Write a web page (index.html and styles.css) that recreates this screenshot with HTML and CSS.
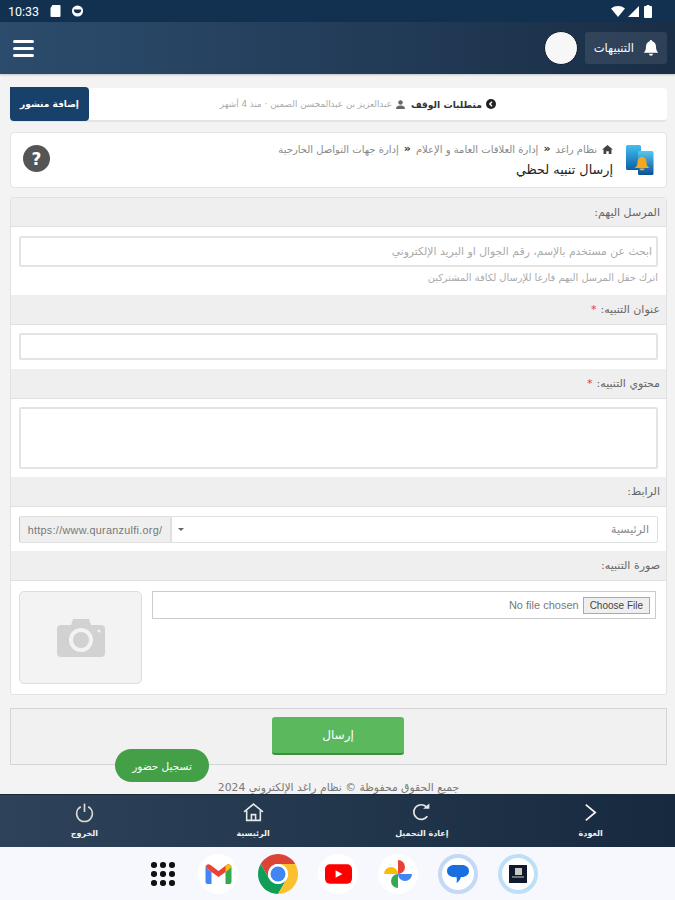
FILE: index.html

```html
<!DOCTYPE html>
<html lang="ar" dir="rtl">
<head>
    <meta charset="UTF-8">
    <meta name="viewport" content="width=device-width, initial-scale=1.0">
    <title>إرسال تنبيه لحظي</title>
    <link rel="stylesheet" href="styles.css">
</head>
<body>
    <!-- Android status bar -->
    <div class="status-bar" dir="ltr">
        <div class="status-side">
            <span class="clock">10:33</span>
            <svg class="status-icon" viewBox="0 0 12 14"><path d="M3 1h7a1 1 0 0 1 1 1v10a1 1 0 0 1-1 1H2a1 1 0 0 1-1-1V4z" fill="#fff"/></svg>
            <svg class="status-icon" viewBox="0 0 14 14"><circle cx="7" cy="7" r="6" fill="#fff"/><path d="M3 5.500h8a4 4 0 0 1-8 0z" fill="#12304f"/></svg>
        </div>
        <div class="status-side">
            <svg class="wifi" viewBox="0 0 14 11"><path d="M0 2.500C4 -.8 10 -.8 14 2.500L7 11z" fill="#fff"/></svg>
            <svg class="signal" viewBox="0 0 11 11"><path d="M11 0v11H0z" fill="#fff"/></svg>
            <svg class="battery" viewBox="0 0 8 13"><path d="M2.500 0h3v1H7a1 1 0 0 1 1 1v10a1 1 0 0 1-1 1H1a1 1 0 0 1-1-1V2a1 1 0 0 1 1-1h1.500z" fill="#fff"/></svg>
        </div>
    </div>

    <header class="top-bar">
        <div class="top-actions">
            <div class="alerts-btn">
                <svg class="bell" viewBox="0 0 16 16"><path d="M8 0a1.200 1.200 0 0 1 1.200 1.300C11.600 1.900 13 4 13 6.500c0 3.500 1 4.800 2.300 6.300H.7C2 11.300 3 10 3 6.500 3 4 4.400 1.900 6.800 1.300A1.200 1.200 0 0 1 8 0zM6 13.800h4a2 2 0 0 1-4 0z" fill="#fff"/></svg>
                <span>التنبيهات</span>
            </div>
            <div class="avatar"></div>
        </div>
        <div class="burger"><span></span><span></span><span></span></div>
    </header>

    <main class="content">
        <div class="card ticker">
            <div class="ticker-text">
                <svg class="dot-icon" viewBox="0 0 10 10"><circle cx="5" cy="5" r="5" fill="#222"/><path d="M6 2.800 3.800 5 6 7.200" fill="none" stroke="#fff" stroke-width="1.400"/></svg>
                <strong>متطلبات الوقف</strong>
                <svg class="user-icon" viewBox="0 0 10 10"><circle cx="5" cy="2.800" r="2.500" fill="#666"/><path d="M0 10c0-3 2-4 5-4s5 1 5 4z" fill="#666"/></svg>
                <span>عبدالعزيز بن عبدالمحسن الصمين · منذ 4 أشهر</span>
            </div>
            <a class="add-post">إضافة منشور</a>
        </div>

        <div class="card page-head">
            <svg class="page-icon" viewBox="0 0 28 30">
                <defs>
                    <linearGradient id="phone-back" x1="0" y1="0" x2="0" y2="1">
                        <stop offset="0" stop-color="#3fc0f0"/>
                        <stop offset="1" stop-color="#0d5fa8"/>
                    </linearGradient>
                    <linearGradient id="phone-front" x1="0" y1="0" x2="0" y2="1">
                        <stop offset="0" stop-color="#58c8f2"/>
                        <stop offset="1" stop-color="#0a4f96"/>
                    </linearGradient>
                </defs>
                <rect x="0" y="0" width="15" height="25" rx="1.500" fill="url(#phone-back)"/>
                <rect x="12" y="6" width="15.500" height="24" rx="1.500" fill="url(#phone-front)"/>
                <path d="M16 12c3 0 4.500 2.500 4.500 5.500 0 3 1 4 3 5.500H8.500c2-1.500 3-2.500 3-5.500 0-3 1.500-5.500 4.500-5.500z" fill="#f7a823"/>
                <path d="M13.500 23.500h5a2.500 2 0 0 1-5 0z" fill="#f7a823"/>
            </svg>
            <div class="page-titles">
                <div class="crumbs">
                    <svg class="home-icon" viewBox="0 0 12 10"><path d="M6 0 0 5h1.600v5h3V7h2.800v3h3V5H12z" fill="#444"/></svg>
                    <span>نظام راغد</span><b>«</b><span>إدارة العلاقات العامة و الإعلام</span><b>«</b><span>إدارة جهات التواصل الخارجية</span>
                </div>
                <h1>إرسال تنبيه لحظي</h1>
            </div>
            <div class="help">?</div>
        </div>

        <form class="panel">
            <div class="panel-head head-first">المرسل اليهم:</div>
            <div class="panel-body body-to">
                <input class="field" type="text" placeholder="ابحث عن مستخدم بالإسم، رقم الجوال او البريد الإلكتروني">
                <p class="hint">اترك حقل المرسل اليهم فارغا للإرسال لكافة المشتركين</p>
            </div>

            <div class="panel-head">عنوان التنبيه: <i>*</i></div>
            <div class="panel-body body-title">
                <input class="field field-title" type="text">
            </div>

            <div class="panel-head">محتوي التنبيه: <i>*</i></div>
            <div class="panel-body body-text">
                <textarea class="field area"></textarea>
            </div>

            <div class="panel-head">الرابط:</div>
            <div class="panel-body body-link">
                <div class="link-row">
                    <div class="link-select">
                        <span>الرئيسية</span>
                        <em class="caret"></em>
                    </div>
                    <div class="link-addon" dir="ltr">https://www.quranzulfi.org/</div>
                </div>
            </div>

            <div class="panel-head">صورة التنبيه:</div>
            <div class="panel-body body-image">
                <input class="file-input" type="file">
                <div class="photo-box">
                    <svg class="camera" viewBox="0 0 48 38">
                        <path d="M4 6h10l2-6h16l2 6h10a4 4 0 0 1 4 4v24a4 4 0 0 1-4 4H4a4 4 0 0 1-4-4V10a4 4 0 0 1 4-4z" fill="#d2d2d2"/>
                        <circle cx="24" cy="21" r="12" fill="#f3f3f3"/>
                        <circle cx="24" cy="21" r="8" fill="#d2d2d2"/>
                        <circle cx="42" cy="12" r="1.500" fill="#f3f3f3"/>
                    </svg>
                </div>
            </div>
        </form>

        <div class="submit-panel">
            <button class="send" type="button">إرسال</button>
        </div>

        <p class="copyright">جميع الحقوق محفوظة © نظام راغد الإلكتروني 2024</p>
        <a class="attend">تسجيل حضور</a>
    </main>

    <nav class="bottom-nav">
        <a>
            <svg viewBox="0 0 20 20"><path d="M5.500 2.500 14.500 10l-9 7.500" fill="none" stroke="#f2f2f2" stroke-width="1.700"/></svg>
            <span>العودة</span>
        </a>
        <a>
            <svg viewBox="0 0 20 20"><path d="M15.500 13.500A7 7 0 1 1 14.500 4.500" fill="none" stroke="#e8e8e8" stroke-width="1.600"/><path d="M11.500 6.500h6v-5z" fill="#e8e8e8"/></svg>
            <span>إعادة التحميل</span>
        </a>
        <a>
            <svg viewBox="0 0 20 20"><path d="M1 9.500 10 2l9 7.500M3.500 8v9.500h13V8M8 17.500V12h4v5.500" fill="none" stroke="#e8e8e8" stroke-width="1.500"/></svg>
            <span>الرئيسية</span>
        </a>
        <a>
            <svg viewBox="0 0 20 20"><path d="M6.500 4.500a7.500 7.500 0 1 0 7 0" fill="none" stroke="#d8d8d8" stroke-width="1.500"/><path d="M10 1.500v8" stroke="#d8d8d8" stroke-width="1.600"/></svg>
            <span>الخروج</span>
        </a>
    </nav>

    <!-- Android taskbar -->
    <div class="dock" dir="ltr">
        <div class="dock-item">
            <div class="app-grid">
                <span></span><span></span><span></span><span></span><span></span><span></span><span></span><span></span><span></span>
            </div>
        </div>
        <div class="dock-item">
            <svg class="dock-icon gmail" viewBox="0 0 26 20">
                <path d="M0 3v15a2 2 0 0 0 2 2h4V8z" fill="#4285f4"/>
                <path d="M26 3v15a2 2 0 0 1-2 2h-4V8z" fill="#34a853"/>
                <path d="M0 3a3 3 0 0 1 5-2l8 6 8-6a3 3 0 0 1 5 2l-6 5-7 5-7-5z" fill="#ea4335"/>
                <path d="M20 8V1.500l1-.5a3 3 0 0 1 5 2z" fill="#fbbc04"/>
            </svg>
        </div>
        <div class="dock-item">
            <svg class="dock-icon chrome" viewBox="0 0 40 40">
                <path d="M37.320 10A20 20 0 0 0 2.680 10L11.340 25A10 10 0 0 1 20 10z" fill="#db4437"/>
                <path d="M2.680 10A20 20 0 0 0 20 40L28.660 25A10 10 0 0 1 11.340 25z" fill="#0f9d58"/>
                <path d="M20 40A20 20 0 0 0 37.320 10H20A10 10 0 0 1 28.660 25z" fill="#fbc02d"/>
                <circle cx="20" cy="20" r="10" fill="#fff"/>
                <circle cx="20" cy="20" r="7.500" fill="#4285f4"/>
            </svg>
        </div>
        <div class="dock-item">
            <svg class="dock-icon youtube" viewBox="0 0 28 20"><rect width="28" height="20" rx="5" fill="#f00"/><path d="m11 6 7 4-7 4z" fill="#fff"/></svg>
        </div>
        <div class="dock-item">
            <svg class="dock-icon photos" viewBox="0 0 28 28">
                <path d="M0 14a7 7 0 0 1 14 0z" fill="#fbbc04"/>
                <path d="M14 0a7 7 0 0 1 0 14z" fill="#ea4335"/>
                <path d="M28 14a7 7 0 0 1-14 0z" fill="#4285f4"/>
                <path d="M14 28a7 7 0 0 1 0-14z" fill="#34a853"/>
            </svg>
        </div>
        <div class="dock-item ring">
            <svg class="dock-icon bubble" viewBox="0 0 22 20"><path d="M7 1h8c4 0 7 2.500 7 6s-3 6-7 6h-1c-.5 2-2 4.500-4.500 6 .5-2 .5-4 0-6H7c-4 0-7-2.500-7-6s3-6 7-6z" fill="#1a6fe0"/></svg>
        </div>
        <div class="dock-item ring ring-light">
            <div class="square-app"><span></span><em></em></div>
        </div>
    </div>
</body>
</html>
```

FILE: styles.css

```css
* {
    box-sizing: border-box;
}
body {
    margin: 0;
    height: 900px;
    display: flex;
    flex-direction: column;
    overflow: hidden;
    font-family: "DejaVu Sans", "Noto Sans", sans-serif;
    font-size: 10px;
    color: #555;
    background-color: #f3f3f3;
}

/* status bar */
.status-bar {
    height: 22px;
    background-color: #12304f;
    display: flex;
    justify-content: space-between;
    align-items: center;
    padding: 0 23px 0 8px;
    color: #fff;
}
.status-side {
    display: flex;
    align-items: center;
    gap: 3px;
}
.clock {
    font-family: Roboto, sans-serif;
    font-size: 12.500px;
    margin-right: 7px;
}
.status-icon {
    width: 13px;
    height: 14px;
    margin-right: 6px;
}
.wifi {
    width: 14px;
    height: 11px;
}
.signal {
    width: 11px;
    height: 11px;
}
.battery {
    width: 8px;
    height: 13px;
    margin-left: 2px;
}

/* header */
.top-bar {
    height: 52px;
    background: linear-gradient(to left, #1a2e46, #2c4c6d);
    display: flex;
    justify-content: space-between;
    align-items: center;
    padding: 0 8px 0 13px;
    box-shadow: 0 1px 2px rgba(0, 0, 0, 0.2);
}
.top-actions {
    display: flex;
    align-items: center;
    gap: 7px;
}
.alerts-btn {
    width: 82px;
    height: 32px;
    background-color: rgba(255, 255, 255, 0.09);
    border-radius: 3px;
    display: flex;
    align-items: center;
    gap: 9px;
    padding: 0 8px;
    color: #fff;
    font-size: 11.500px;
}
.bell {
    width: 16px;
    height: 16px;
}
.avatar {
    width: 34px;
    height: 34px;
    border-radius: 50%;
    background-color: #f7f7f7;
    border: 1.500px solid #0d1c2c;
}
.burger {
    width: 21px;
    display: flex;
    flex-direction: column;
    gap: 4px;
}
.burger span {
    display: block;
    height: 3px;
    border-radius: 2px;
    background-color: #fff;
}

/* page */
.content {
    position: relative;
    flex: 1;
    padding: 14px 8px 0 10px;
}
.card {
    background-color: #fff;
    border-radius: 4px;
    border: 1px solid #e4e4e4;
}
.ticker {
    height: 34px;
    display: flex;
    justify-content: space-between;
    align-items: center;
    padding-right: 171px;
    border-width: 0 0 2px;
}
.ticker-text {
    display: flex;
    align-items: center;
    gap: 4px;
    color: #aaa;
    font-size: 8.800px;
}
.ticker-text strong {
    color: #333;
    font-size: 9.200px;
    margin-left: 2px;
}
.dot-icon {
    width: 10px;
    height: 10px;
}
.user-icon {
    width: 9px;
    height: 9px;
}
.add-post {
    width: 79px;
    height: 34px;
    background-color: #17406a;
    color: #fff;
    font-weight: bold;
    font-size: 9px;
    border-radius: 0 4px 4px 4px;
    display: flex;
    align-items: center;
    justify-content: center;
}
.page-head {
    height: 56px;
    margin-top: 10px;
    display: flex;
    align-items: center;
    padding: 0 12px 0 12px;
}
.page-icon {
    width: 28px;
    height: 30px;
    margin-left: 13px;
}
.page-titles {
    flex: 1;
}
.crumbs {
    display: flex;
    align-items: center;
    gap: 5px;
    color: #888;
    font-size: 10px;
}
.crumbs b {
    color: #333;
    font-size: 11px;
    line-height: 10px;
}
.home-icon {
    width: 11px;
    height: 9px;
}
h1 {
    margin: 7px 0 0;
    font-size: 12.800px;
    font-weight: normal;
    color: #222;
}
.help {
    width: 27px;
    height: 27px;
    margin-top: -3px;
    border-radius: 50%;
    background-color: #555;
    color: #fff;
    font-weight: bold;
    font-size: 17px;
    display: flex;
    align-items: center;
    justify-content: center;
}

/* form */
.panel {
    margin-top: 9px;
    background-color: #fff;
    border: 1px solid #e2e2e2;
    border-radius: 3px;
}
.panel-head {
    height: 30px;
    padding: 0 6px;
    display: flex;
    align-items: center;
    gap: 4px;
    background-color: #efefef;
    border-bottom: 1px solid #e0e0e0;
    font-size: 11px;
    color: #666;
}
.head-first {
    height: 29px;
}
.panel-head i {
    color: #e33;
    font-style: normal;
}
.panel-body {
    padding: 9px 8px 0;
}
.body-to {
    height: 68px;
}
.body-title {
    height: 44px;
    padding-top: 8px;
}
.body-text {
    height: 78px;
    padding-top: 8px;
}
.body-link {
    height: 44px;
}
.body-image {
    height: 113px;
    padding: 10px 10px 0 8px;
    display: flex;
    justify-content: space-between;
}
.field {
    display: block;
    width: 100%;
    height: 31px;
    border: 2px solid #e4e4e4;
    border-radius: 2px;
    background-color: #fff;
    padding: 0 4px;
    font-family: inherit;
    font-size: 10.800px;
    outline: none;
}
.field::placeholder {
    color: #aaa;
}
.field-title {
    height: 27px;
}
.area {
    height: 62px;
    resize: none;
}
.hint {
    margin: 5px 0 0;
    font-size: 9.900px;
    color: #aaa;
}
.link-row {
    display: flex;
    height: 27px;
}
.link-select {
    flex: 1;
    border: 1px solid #e0e0e0;
    border-radius: 0 2px 2px 0;
    display: flex;
    justify-content: space-between;
    align-items: center;
    padding: 0 8px 0 6px;
    color: #888;
    font-size: 11px;
}
.caret {
    border-top: 3px solid #666;
    border-left: 3px solid transparent;
    border-right: 3px solid transparent;
}
.link-addon {
    width: 152px;
    background-color: #efefef;
    border: 1px solid #e0e0e0;
    border-left-color: #ccc;
    border-radius: 2px 0 0 2px;
    font-family: "Liberation Sans", sans-serif;
    font-size: 10.800px;
    letter-spacing: 0.3px;
    color: #777;
    display: flex;
    align-items: center;
    justify-content: center;
    white-space: nowrap;
}
.file-input {
    width: 504px;
    height: 28px;
    border: 1px solid #ccc;
    padding: 5px;
    font-family: "Liberation Sans", sans-serif;
    font-size: 11px;
    color: #777;
}
.file-input::file-selector-button {
    height: 17px;
    font-size: 10px;
    font-family: "Liberation Sans", sans-serif;
    margin: 0 0 0 4px;
    padding: 0 6px;
    border: 1px solid #aaa;
    border-radius: 0;
    color: #444;
    background-color: #efefef;
}
.photo-box {
    width: 123px;
    height: 93px;
    background-color: #f3f3f3;
    border: 1px solid #ddd;
    border-radius: 5px;
    display: flex;
    align-items: center;
    justify-content: center;
}
.camera {
    width: 48px;
    height: 38px;
}

/* submit */
.submit-panel {
    margin-top: 13px;
    height: 57px;
    background-color: #f1f1f1;
    border: 1px solid #d4d4d4;
    display: flex;
    justify-content: center;
    padding: 8px 1px 0 0;
}
.send {
    width: 132px;
    height: 38px;
    background-color: #5cb85c;
    border: none;
    border-bottom: 2px solid #3f8f3f;
    border-radius: 3px;
    color: #fff;
    font-family: inherit;
    font-size: 12px;
}
.copyright {
    margin: 16px 0 0;
    text-align: center;
    font-size: 10.800px;
    color: #777;
}
.attend {
    position: absolute;
    left: 115px;
    top: 675px;
    width: 94px;
    height: 33px;
    border-radius: 17px;
    background-color: #43a047;
    color: #fff;
    font-size: 10.500px;
    display: flex;
    align-items: center;
    justify-content: center;
}

/* bottom navigation */
.bottom-nav {
    height: 53px;
    background: linear-gradient(to left, #16293f, #2e4359);
    border-top: 1px solid #1a2a3a;
    display: grid;
    grid-template-columns: repeat(4, 1fr);
}
.bottom-nav a {
    display: flex;
    flex-direction: column;
    align-items: center;
    padding-top: 7px;
    color: #f2f2f2;
    font-size: 8px;
    font-weight: bold;
}
.bottom-nav svg {
    width: 21px;
    height: 21px;
    margin-bottom: 6px;
}

/* taskbar */
.dock {
    height: 53px;
    background-color: #f7f8fd;
    display: flex;
    justify-content: center;
    gap: 20px;
    padding: 7px 0 0 1px;
}
.dock-item {
    width: 40px;
    height: 40px;
    border-radius: 50%;
    background-color: #fff;
    display: flex;
    align-items: center;
    justify-content: center;
}
.dock-item:first-child {
    background-color: transparent;
}
.app-grid {
    width: 24px;
    margin-left: 10px;
    display: grid;
    grid-template-columns: repeat(3, 1fr);
    gap: 3.500px;
}
.app-grid span {
    width: 5.500px;
    height: 5.500px;
    border-radius: 50%;
    background-color: #111;
}
.gmail {
    width: 27px;
    height: 20px;
}
.chrome {
    width: 40px;
    height: 40px;
}
.youtube {
    width: 27px;
    height: 20px;
}
.photos {
    width: 28px;
    height: 28px;
}
.ring {
    border: 4px solid #c4d9f6;
}
.ring-light {
    border-color: #bde0f8;
}
.bubble {
    width: 22px;
    height: 20px;
}
.square-app {
    width: 18px;
    height: 18px;
    background-color: #101a2c;
    display: flex;
    flex-direction: column;
    align-items: center;
    padding-top: 3px;
    gap: 1px;
}
.square-app span {
    width: 7px;
    height: 7px;
    background-color: #c9c9c9;
}
.square-app em {
    width: 12px;
    height: 2px;
    background-color: #6a7280;
}
```
